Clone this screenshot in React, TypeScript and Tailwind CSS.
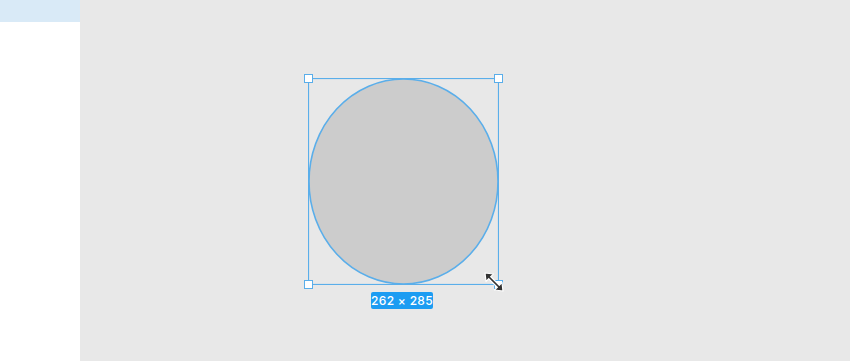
import React from "react";

function Handle({ className }: { className: string }) {
  return (
    <div
      className={`absolute w-[9px] h-[9px] bg-white border border-[#5aaeea] ${className}`}
    />
  );
}

export default function App() {
  return (
    <div
      className="flex w-[850px] h-[361px] overflow-hidden"
      style={{ fontFamily: "Inter, 'Liberation Sans', sans-serif" }}
    >
      <aside className="w-[80px] h-full bg-white flex flex-col">
        <div className="h-[22px] bg-[#d9eaf7]" />
      </aside>
      <main className="flex-1 h-full bg-[#e8e8e8] relative">
        <div className="absolute left-[228px] top-[78px] flex flex-col items-center gap-[7px]">
          <div className="relative w-[191px] h-[207px]">
            <svg className="block" width="191" height="207" viewBox="0 0 191 207">
              <ellipse
                cx="95.5"
                cy="103.5"
                rx="94.5"
                ry="102.5"
                fill="#cccccc"
                stroke="#5aaeea"
                strokeWidth="1.6"
              />
              <rect x="0.5" y="0.5" width="190" height="206" fill="none" stroke="#5aaeea" strokeWidth="1.2" />
            </svg>
            <Handle className="-left-[4px] -top-[4px]" />
            <Handle className="-right-[4px] -top-[4px]" />
            <Handle className="-left-[4px] -bottom-[4px]" />
            <Handle className="-right-[4px] -bottom-[4px]" />
            <svg className="absolute -right-[6px] -bottom-[8px]" width="22" height="22" viewBox="0 0 22 22">
              <line x1="4" y1="4" x2="18" y2="18" stroke="#ffffff" strokeWidth="4" strokeLinecap="round" />
              <polygon points="2,2 10.5,3 3,10.5" fill="#333" stroke="#fff" strokeWidth="1.2" strokeLinejoin="round" />
              <polygon points="20,20 11.5,19 19,11.5" fill="#333" stroke="#fff" strokeWidth="1.2" strokeLinejoin="round" />
              <line x1="5" y1="5" x2="17" y2="17" stroke="#333" strokeWidth="1.7" />
            </svg>
          </div>
          <div className="mr-[3px] h-[17px] w-[62px] bg-[#1c9cf2] rounded-[2px] flex items-center justify-center text-white text-[12px] font-medium tracking-[0.3px]">
            262 × 285
          </div>
        </div>
      </main>
    </div>
  );
}
